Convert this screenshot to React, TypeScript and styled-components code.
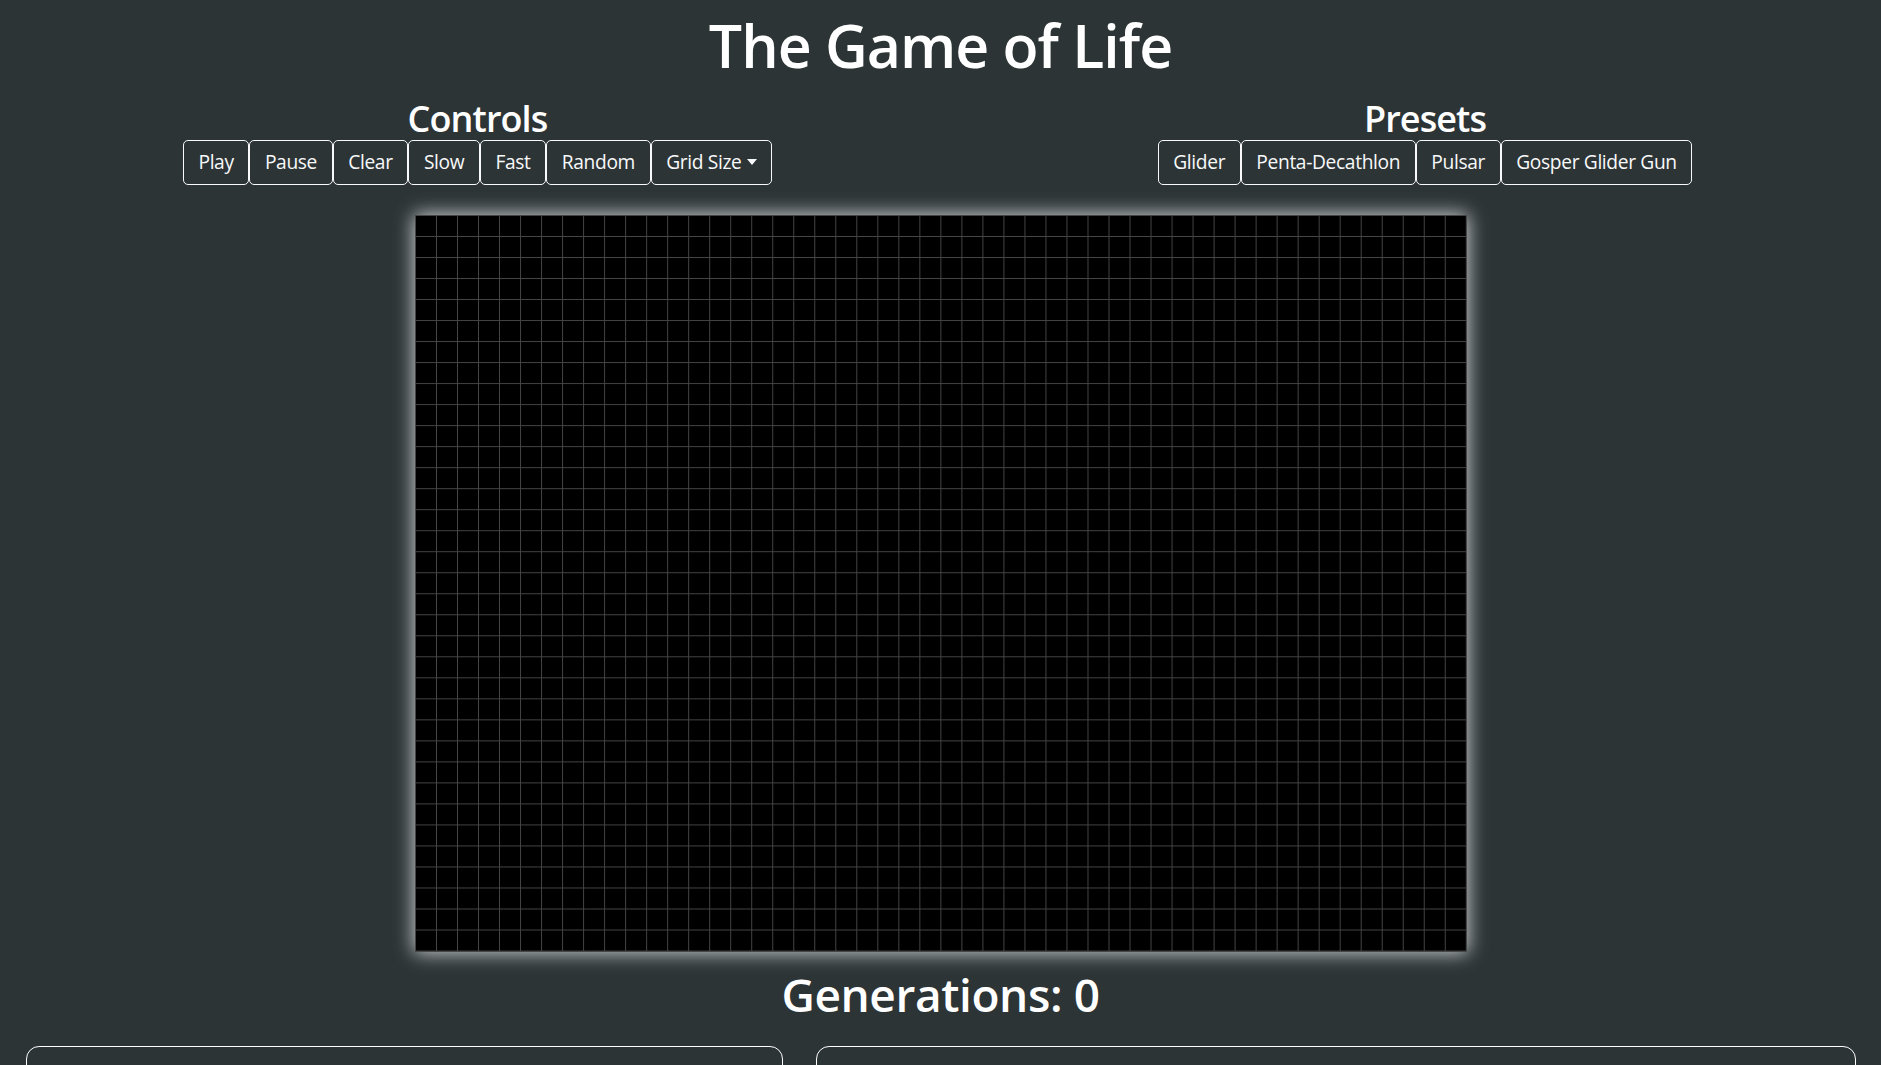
import React from "react";
import styled, { createGlobalStyle } from "styled-components";

const GlobalStyle = createGlobalStyle`
  html {
    font-size: 19.2px;
    background: #2d3436;
    scrollbar-width: none;
  }
  html::-webkit-scrollbar { display: none; }
  body {
    margin: 0;
    background: #2d3436;
    color: #ffffff;
    font-family: "Open Sans", "Noto Sans", "DejaVu Sans", sans-serif;
  }
  *, *::before, *::after { box-sizing: border-box; }
`;

const Page = styled.main`
  display: flex;
  flex-direction: column;
  padding-top: 7px;
`;

const Title = styled.h1`
  margin: 0;
  text-align: center;
  font-size: 59px;
  font-weight: 600;
  line-height: 77px;
  letter-spacing: -1px;
`;

const Toolbar = styled.div`
  display: grid;
  grid-template-columns: 955px 912px;
  justify-content: space-between;
  margin-top: 13px;
`;

const Group = styled.section`
  display: flex;
  flex-direction: column;
  align-items: center;
`;

const GroupTitle = styled.h2`
  margin: 0;
  font-size: 36px;
  font-weight: 600;
  line-height: 43px;
  letter-spacing: -0.9px;
`;

const ButtonRow = styled.div`
  display: flex;
`;

const Button = styled.button`
  display: inline-flex;
  align-items: center;
  font-family: inherit;
  font-size: 19.2px;
  line-height: 28.8px;
  padding: 7.2px 14.6px;
  color: #f8f9fa;
  background: transparent;
  border: 1px solid #f8f9fa;
  border-radius: 5px;
  cursor: pointer;
  letter-spacing: -0.35px;
`;

const Caret = styled.span`
  display: inline-block;
  margin-left: 5px;
  margin-top: -2px;
  border-top: 6px solid #f8f9fa;
  border-right: 5.5px solid transparent;
  border-left: 5.5px solid transparent;
`;

const Board = styled.div`
  align-self: center;
  margin-top: 30px;
  width: 1052px;
  height: 737px;
  background-color: #000000;
  background-image: linear-gradient(to right, #464646 1px, transparent 1px),
    linear-gradient(to bottom, #464646 1px, transparent 1px);
  background-size: 21.02px 21.02px;
  border-right: 1px solid #464646;
  border-bottom: 1px solid #464646;
  box-shadow: 0 0 18px 1px rgba(235, 240, 240, 0.85);
`;

const Generations = styled.h1`
  margin: 14px 0 0;
  text-align: center;
  font-size: 46px;
  font-weight: 600;
  line-height: 57.6px;
  letter-spacing: -0.4px;
`;

const Cards = styled.div`
  display: grid;
  grid-template-columns: 757px 1040px;
  column-gap: 33px;
  padding: 0 25px 0 26px;
  margin-top: 22px;
`;

const Card = styled.article`
  min-height: 260px;
  border: 1px solid #ffffff;
  border-radius: 13px;
`;

const controls = ["Play", "Pause", "Clear", "Slow", "Fast", "Random"];
const presets = ["Glider", "Penta-Decathlon", "Pulsar", "Gosper Glider Gun"];

export default function App() {
  return (
    <>
      <GlobalStyle />
      <Page>
        <Title>The Game of Life</Title>
        <Toolbar>
          <Group>
            <GroupTitle>Controls</GroupTitle>
            <ButtonRow>
              {controls.map((c) => (
                <Button key={c}>{c}</Button>
              ))}
              <Button>
                Grid Size
                <Caret />
              </Button>
            </ButtonRow>
          </Group>
          <Group>
            <GroupTitle>Presets</GroupTitle>
            <ButtonRow>
              {presets.map((p) => (
                <Button key={p}>{p}</Button>
              ))}
            </ButtonRow>
          </Group>
        </Toolbar>
        <Board />
        <Generations>Generations: 0</Generations>
        <Cards>
          <Card />
          <Card />
        </Cards>
      </Page>
    </>
  );
}
